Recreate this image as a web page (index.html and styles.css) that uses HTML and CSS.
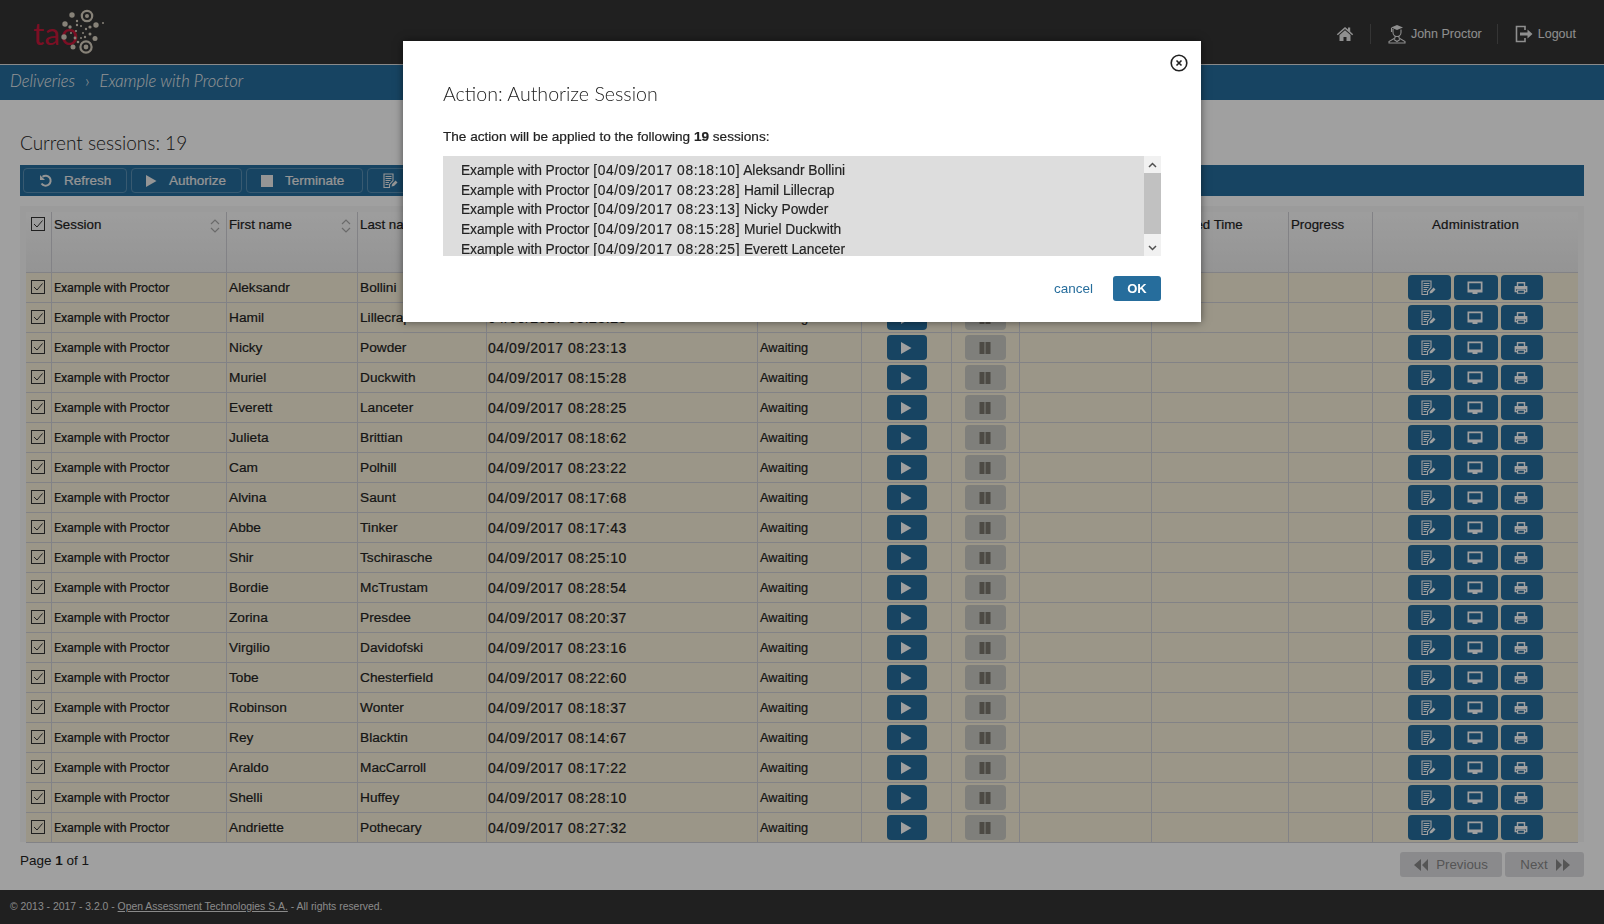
FILE: index.html
```html
<!DOCTYPE html>
<html lang="en">
<head>
    <meta charset="UTF-8">
    <title>Current sessions</title>
    <link rel="stylesheet" href="styles.css">
</head>
<body>
    <svg class="icon-defs" xmlns="http://www.w3.org/2000/svg">
        <symbol id="i-check" viewBox="0 0 14 14">
            <rect x="0.5" y="0.5" width="13" height="13" fill="none" stroke="currentColor"/>
            <path d="M3 7l3 3 5.5-6.5" fill="none" stroke="currentColor" stroke-width="1"/>
        </symbol>
        <symbol id="i-play" viewBox="0 0 14 14">
            <path d="M2 1v12l10.500-6z" fill="currentColor"/>
        </symbol>
        <symbol id="i-pause" viewBox="0 0 14 14">
            <path d="M1.500 1h5v12h-5zM7.500 1h5v12h-5z" fill="currentColor"/>
        </symbol>
        <symbol id="i-report" viewBox="0 0 16 16">
            <path d="M2 1h9v6.500l-3.500 4v3h-5.500z M3.500 3.500h6M3.500 5.500h6M3.500 7.500h5M3.500 9.500h3.500M3.500 11.500h3" fill="none" stroke="currentColor" stroke-width="1.100"/>
            <path d="M9.500 13.500l0.600-2.500 3.500-3.500 1.900 1.900-3.500 3.500z" fill="currentColor"/>
        </symbol>
        <symbol id="i-monitor" viewBox="0 0 16 16">
            <path d="M0.500 1.500h15v11h-5v1.500h-5v-1.500h-5z M2.200 3.200v6.300h11.600v-6.300z" fill="currentColor" fill-rule="evenodd"/>
        </symbol>
        <symbol id="i-print" viewBox="0 0 16 16">
            <path d="M4 6v-4h8v4M4 12h-2.500v-5.500h13v5.500h-2.500" fill="none" stroke="currentColor" stroke-width="1.600"/>
            <path d="M4 10.500h8v3.500h-8z" fill="none" stroke="currentColor" stroke-width="1.400"/>
            <path d="M1.500 6.500h13v3h-13z" fill="currentColor"/>
        </symbol>
        <symbol id="i-sort" viewBox="0 0 10 14">
            <path d="M1 5l4-4 4 4M1 9l4 4 4-4" fill="none" stroke="currentColor" stroke-width="1.200"/>
        </symbol>
    </svg>

    <header class="topbar">
        <a class="logo" href="#">
            <svg width="80" height="56" viewBox="30 4 80 56" xmlns="http://www.w3.org/2000/svg">
                <text class="logo-word" x="33" y="45">tao</text>
                <g class="logo-dots">
                    <circle cx="87" cy="16" r="5.200" fill="none" stroke-width="2.200"/>
                    <circle cx="87" cy="16" r="2"/>
                    <circle cx="86" cy="47" r="5.600" fill="none" stroke-width="2.200"/>
                    <circle cx="86" cy="47" r="2.400"/>
                    <circle cx="64" cy="37" r="2.700"/>
                    <circle cx="72" cy="15" r="2.700"/>
                    <circle cx="65" cy="24" r="2.700"/>
                    <circle cx="96" cy="25" r="2.700"/>
                    <circle cx="95" cy="38.500" r="2.500"/>
                    <circle cx="73" cy="47" r="2.500"/>
                    <circle cx="70" cy="27" r="1.700"/>
                    <circle cx="77" cy="21" r="1.200"/>
                    <circle cx="77" cy="25" r="1.200"/>
                    <circle cx="81" cy="26" r="1"/>
                    <circle cx="90" cy="27" r="1.600"/>
                    <circle cx="86" cy="29" r="1.200"/>
                    <circle cx="76" cy="31" r="1.100"/>
                    <circle cx="83" cy="33" r="1"/>
                    <circle cx="90" cy="34" r="1.500"/>
                    <circle cx="85" cy="37" r="1.200"/>
                    <circle cx="75" cy="38" r="1.400"/>
                    <circle cx="78" cy="42" r="1.300"/>
                    <circle cx="81" cy="38" r="1"/>
                    <circle cx="71" cy="33" r="1"/>
                    <circle cx="103" cy="23" r="1"/>
                </g>
            </svg>
        </a>
        <nav class="user-nav">
            <a class="nav-item" href="#">
                <svg width="18" height="16" viewBox="0 0 18 16" xmlns="http://www.w3.org/2000/svg"><path d="M9 1l3 2.600v-2h2.200v4l3 2.600-1 1.100-7.200-6.200-7.200 6.200-1-1.100z M3.500 9l5.500-4.800 5.500 4.800v6h-4v-4h-3v4h-4z" fill="currentColor"/></svg>
            </a>
            <a class="nav-item" href="#">
                <svg width="18" height="20" viewBox="0 0 18 20" xmlns="http://www.w3.org/2000/svg"><path d="M3 3.500l6-2.500 6 2.500-6 2.500z" fill="currentColor"/><path d="M5 5v3.500c0 2.500 2 4 4 4s4-1.500 4-4v-3M7 12v2l-6 3.500v1.500h16v-1.500l-6-3.500v-2M6 15.500l3 2 3-2M3.500 4v4" fill="none" stroke="currentColor" stroke-width="1.100"/></svg>
                <span>John Proctor</span>
            </a>
            <a class="nav-item" href="#">
                <svg width="18" height="18" viewBox="0 0 18 18" xmlns="http://www.w3.org/2000/svg"><path d="M10 5v-3.500h-8.500v15h8.500v-3.500" fill="none" stroke="currentColor" stroke-width="1.600"/><path d="M5 7.500h7.500v-3l5 4.500-5 4.500v-3h-7.500z" fill="currentColor"/></svg>
                <span>Logout</span>
            </a>
        </nav>
    </header>

    <div class="breadcrumbs">
        <a href="#">Deliveries</a>
        <span class="crumb-sep">&#8250;</span>
        <a href="#">Example with Proctor</a>
    </div>

    <main class="content">
        <h2 class="page-title">Current sessions: 19</h2>

        <div class="toolbar">
            <button class="tool-btn tool-refresh">
                <svg width="14" height="14" viewBox="0 0 14 14" xmlns="http://www.w3.org/2000/svg"><path d="M3.500 2.800a5 5 0 1 1-1 6.700" fill="none" stroke="currentColor" stroke-width="2"/><path d="M1 1v5h5z" fill="currentColor"/></svg>
                Refresh
            </button>
            <button class="tool-btn tool-authorize"><svg width="14" height="14"><use href="#i-play"/></svg> Authorize</button>
            <button class="tool-btn tool-terminate"><span class="stop-square"></span> Terminate</button>
            <button class="tool-btn tool-report"><svg width="16" height="16"><use href="#i-report"/></svg> Report</button>
        </div>

        <div class="table-wrap">
            <table class="sessions">
                <colgroup>
                    <col class="c-check"><col class="c-session"><col class="c-first"><col class="c-last"><col class="c-date"><col class="c-status"><col class="c-auth"><col class="c-pause"><col class="c-remain"><col class="c-ext"><col class="c-progress"><col class="c-admin">
                </colgroup>
                <thead>
                    <tr>
                        <th><svg class="check"><use href="#i-check"/></svg></th>
                        <th class="sortable">Session <svg class="sort"><use href="#i-sort"/></svg></th>
                        <th class="sortable">First name <svg class="sort"><use href="#i-sort"/></svg></th>
                        <th>Last name</th>
                        <th>Started at</th>
                        <th>Status</th>
                        <th>Authorize</th>
                        <th>Pause</th>
                        <th>Remaining</th>
                        <th>Extended Time</th>
                        <th>Progress</th>
                        <th class="th-center">Administration</th>
                    </tr>
                </thead>
                <tbody id="rows"></tbody>
            </table>
        </div>

        <div class="page-foot">
            <div class="page-count">Page <b>1</b> of 1</div>
            <div class="pager">
                <button class="page-btn btn-prev"><svg width="16" height="14" viewBox="0 0 16 14" xmlns="http://www.w3.org/2000/svg"><path d="M8 1v12l-7-6zM15 1v12l-6-6z" fill="currentColor"/></svg> Previous</button>
                <button class="page-btn btn-next">Next <svg width="16" height="14" viewBox="0 0 16 14" xmlns="http://www.w3.org/2000/svg"><path d="M1 1v12l6-6zM8 1v12l7-6z" fill="currentColor"/></svg></button>
            </div>
        </div>
    </main>

    <footer class="footer">&copy; 2013 - 2017 - 3.2.0 - <a href="#">Open Assessment Technologies S.A.</a> - All rights reserved.</footer>

    <div class="backdrop"></div>

    <div class="modal">
        <button class="modal-close">
            <svg width="18" height="18" viewBox="0 0 18 18" xmlns="http://www.w3.org/2000/svg"><circle cx="9" cy="9" r="7.800" fill="none" stroke="currentColor" stroke-width="1.600"/><path d="M6.500 6.500l5 5M11.500 6.500l-5 5" fill="none" stroke="currentColor" stroke-width="1.600"/></svg>
        </button>
        <h3 class="modal-title">Action: Authorize Session</h3>
        <p class="modal-text">The action will be applied to the following <b>19</b> sessions:</p>
        <div class="list-box">
            <ul class="session-list" id="sessionList"></ul>
            <div class="fake-scroll">
                <span class="scroll-arrow">
                    <svg width="9" height="6" viewBox="0 0 9 6" xmlns="http://www.w3.org/2000/svg"><path d="M1 5l3.500-3.500 3.500 3.500" fill="none" stroke="currentColor" stroke-width="1.500"/></svg>
                </span>
                <span class="scroll-thumb"></span>
                <span class="scroll-arrow scroll-down">
                    <svg width="9" height="6" viewBox="0 0 9 6" xmlns="http://www.w3.org/2000/svg"><path d="M1 1l3.500 3.500 3.500-3.500" fill="none" stroke="currentColor" stroke-width="1.500"/></svg>
                </span>
            </div>
        </div>
        <div class="modal-actions">
            <a class="cancel-link" href="#">cancel</a>
            <button class="ok-btn">OK</button>
        </div>
    </div>

    <script>
        const sessions = [
            ["Aleksandr", "Bollini", "08:18:10"],
            ["Hamil", "Lillecrap", "08:23:28"],
            ["Nicky", "Powder", "08:23:13"],
            ["Muriel", "Duckwith", "08:15:28"],
            ["Everett", "Lanceter", "08:28:25"],
            ["Julieta", "Brittian", "08:18:62"],
            ["Cam", "Polhill", "08:23:22"],
            ["Alvina", "Saunt", "08:17:68"],
            ["Abbe", "Tinker", "08:17:43"],
            ["Shir", "Tschirasche", "08:25:10"],
            ["Bordie", "McTrustam", "08:28:54"],
            ["Zorina", "Presdee", "08:20:37"],
            ["Virgilio", "Davidofski", "08:23:16"],
            ["Tobe", "Chesterfield", "08:22:60"],
            ["Robinson", "Wonter", "08:18:37"],
            ["Rey", "Blacktin", "08:14:67"],
            ["Araldo", "MacCarroll", "08:17:22"],
            ["Shelli", "Huffey", "08:28:10"],
            ["Andriette", "Pothecary", "08:27:32"]
        ];

        const rows = document.getElementById("rows");
        const list = document.getElementById("sessionList");

        sessions.forEach(([first, last, time]) => {
            const date = `04/09/2017 ${time}`;
            rows.insertAdjacentHTML("beforeend", `
                <tr>
                    <td><svg class="check"><use href="#i-check"/></svg></td>
                    <td class="td-session">Example with Proctor</td>
                    <td>${first}</td>
                    <td>${last}</td>
                    <td class="td-date">${date}</td>
                    <td class="td-status">Awaiting</td>
                    <td class="td-auth"><button class="row-btn btn-play"><svg width="14" height="14"><use href="#i-play"/></svg></button></td>
                    <td class="td-pause"><button class="row-btn btn-pause"><svg width="14" height="14"><use href="#i-pause"/></svg></button></td>
                    <td></td>
                    <td></td>
                    <td></td>
                    <td class="td-admin">
                        <div class="admin-btns">
                            <button class="row-btn btn-admin btn-report"><svg width="16" height="16"><use href="#i-report"/></svg></button>
                            <button class="row-btn btn-admin wide"><svg width="16" height="16"><use href="#i-monitor"/></svg></button>
                            <button class="row-btn btn-admin narrow"><svg width="14" height="14"><use href="#i-print"/></svg></button>
                        </div>
                    </td>
                </tr>`);
            list.insertAdjacentHTML("beforeend", `<li><span class="li-session">Example with Proctor</span> <span class="li-date">[${date}]</span> ${first} ${last}</li>`);
        });
    </script>
</body>
</html>
```

FILE: styles.css
```css
* {
    box-sizing: border-box;
}

html {
    height: 924px;
    overflow: hidden;
}

body {
    margin: 0;
    display: flex;
    flex-direction: column;
    height: 924px;
    overflow: hidden;
    font-family: "Liberation Sans", Arial, sans-serif;
    font-size: 14px;
    color: #222;
    background-color: #fff;
}

a {
    color: inherit;
    text-decoration: none;
}

button {
    font-family: inherit;
    cursor: pointer;
}

.icon-defs {
    display: none;
}

.topbar {
    height: 65px;
    flex: none;
    display: flex;
    justify-content: space-between;
    align-items: center;
    background-color: #333;
    border-bottom: 1px solid #ddd;
    padding: 0 28px 0 30px;
}

.logo {
    display: block;
    height: 56px;
    margin-top: -1px;
}

.logo-word {
    font-family: Lato, "Liberation Sans", sans-serif;
    font-size: 31px;
    letter-spacing: 0.5px;
    fill: #c4183a;
}

.logo-dots {
    fill: #d8cfc0;
    stroke: #d8cfc0;
    stroke-width: 0;
}

.user-nav {
    display: flex;
    align-items: center;
    padding-top: 4px;
}

.nav-item {
    display: flex;
    align-items: center;
    gap: 5px;
    height: 20px;
    color: #e4e4e4;
    font-size: 12.500px;
    padding: 0 15px 0 17px;
    border-right: 1px solid #555;
}

.nav-item:first-child {
    padding-left: 0;
    padding-right: 16px;
}

.nav-item:last-child {
    border-right: 0;
    padding-right: 0;
}

.breadcrumbs {
    height: 35px;
    flex: none;
    display: flex;
    align-items: center;
    gap: 10px;
    padding: 0 0 3px 10px;
    background-color: #266d9c;
    color: #eee;
    font-family: Lato, "Liberation Sans", sans-serif;
    font-size: 16.600px;
    font-style: italic;
    font-weight: 300;
}

.crumb-sep {
    font-style: normal;
}

.content {
    flex: 1;
    padding: 0 20px;
    background-color: #fff;
}

.page-title {
    margin: 28px 0 7px;
    font-family: Lato, "Liberation Sans", sans-serif;
    font-size: 19px;
    font-weight: 300;
    line-height: 30px;
}

.toolbar {
    height: 31px;
    display: flex;
    align-items: center;
    gap: 4px;
    padding-left: 3px;
    background-color: #266d9c;
}

.tool-btn {
    height: 25px;
    display: flex;
    align-items: center;
    padding: 0;
    background-color: #266d9c;
    border: 1px solid #5a90b4;
    border-radius: 4px;
    color: #eee;
    font-size: 13.500px;
    -webkit-text-stroke: 0.2px;
}

.tool-refresh {
    width: 104px;
    padding-left: 15px;
    gap: 11px;
}

.tool-authorize {
    width: 111px;
    padding-left: 12px;
    gap: 11px;
}

.tool-terminate {
    width: 117px;
    padding-left: 14px;
    gap: 12px;
}

.tool-report {
    width: 100px;
    padding-left: 14px;
    gap: 10px;
}

.stop-square {
    width: 12px;
    height: 12px;
    background-color: #eee;
}

.table-wrap {
    height: 636px;
    margin-top: 10px;
    padding: 6px 6px 0;
    background-color: #f8f8f8;
}

.sessions {
    width: 1552px;
    table-layout: fixed;
    border-collapse: separate;
    border-spacing: 0;
    font-size: 13.700px;
    -webkit-text-stroke: 0.2px;
}

.c-check { width: 26px; }
.c-session { width: 175px; }
.c-first { width: 131px; }
.c-last { width: 129px; }
.c-date { width: 271px; }
.c-status { width: 104px; }
.c-auth { width: 90px; }
.c-pause { width: 68px; }
.c-remain { width: 132px; }
.c-ext { width: 137px; }
.c-progress { width: 84px; }
.c-admin { width: 205px; }

.sessions th {
    position: relative;
    height: 60px;
    padding: 5px 0 0 2px;
    vertical-align: top;
    text-align: left;
    font-size: 13.300px;
    font-weight: 400;
    line-height: 16px;
    white-space: nowrap;
    background: linear-gradient(#fbfbfb, #ececec);
    border-right: 1px solid #cfd0d6;
}

.sessions th:last-child {
    border-right: 0;
}

.sessions th:first-child {
    padding: 5px 0 0 5px;
}

.sessions th.th-center {
    text-align: center;
    padding-left: 0;
    letter-spacing: 0.2px;
}

.sort {
    position: absolute;
    right: 6px;
    top: 7px;
    width: 10px;
    height: 14px;
    color: #aaa;
}

.check {
    width: 14px;
    height: 14px;
    display: block;
    color: #333;
}

.sessions td {
    height: 30px;
    padding: 0 0 0 2px;
    background-color: #f7efd9;
    border-top: 1px solid #cfd0d6;
    border-right: 1px solid #cfd0d6;
    white-space: nowrap;
    line-height: 16px;
}

.sessions tr:last-child td {
    box-shadow: 0 1px 0 #cfd0d6;
}

.sessions td:last-child {
    border-right: 0;
}

.sessions td:first-child {
    padding: 0 0 2px 5px;
}

.sessions .td-session {
    font-family: Roboto, sans-serif;
    font-size: 12.500px;
    letter-spacing: -0.15px;
}

.sessions .td-date {
    font-size: 14px;
    letter-spacing: 0.55px;
    padding-left: 1px;
}

.td-status {
    font-size: 12.800px;
}

.sessions .td-auth {
    padding-left: 25px;
}

.sessions .td-pause {
    padding-left: 13px;
}

.sessions .td-admin {
    padding-left: 35px;
}

.admin-btns {
    display: flex;
    gap: 3px;
}

.row-btn {
    height: 25px;
    display: flex;
    align-items: center;
    justify-content: center;
    padding: 0;
    border: 0;
    border-radius: 4px;
    color: #fff;
    background-color: #266d9c;
}

.btn-play {
    width: 40px;
    padding-right: 2px;
}

.btn-pause {
    width: 41px;
    padding-right: 2px;
    background-color: #cbcbc4;
    color: #7b766d;
}

.btn-admin {
    width: 43px;
}

.btn-report {
    padding-right: 3px;
}

.btn-admin.wide {
    width: 44px;
    padding-right: 2px;
}

.btn-admin.narrow {
    width: 42px;
    padding-right: 2px;
}

.page-foot {
    display: flex;
    justify-content: space-between;
    margin-top: 10px;
}

.page-count {
    margin-top: 1px;
    font-size: 13.500px;
    line-height: 16px;
}

.pager {
    display: flex;
    gap: 3px;
}

.page-btn {
    height: 25px;
    display: flex;
    align-items: center;
    justify-content: center;
    padding: 0;
    border: 0;
    border-radius: 3px;
    background-color: #dddde0;
    color: #888;
    font-size: 13.300px;
}

.btn-prev {
    width: 102px;
    gap: 7px;
    padding-right: 1px;
}

.btn-next {
    width: 79px;
    gap: 7px;
    padding-left: 2px;
}

.footer {
    height: 34px;
    flex: none;
    padding-left: 10px;
    background-color: #333;
    color: #ddd;
    font-size: 10.400px;
    line-height: 34px;
}

.footer a {
    text-decoration: underline;
}

.backdrop {
    position: fixed;
    top: 0;
    left: 0;
    right: 0;
    bottom: 0;
    z-index: 10;
    background-color: rgba(0, 0, 0, 0.373);
}

.modal {
    position: absolute;
    top: 41px;
    left: 403px;
    width: 798px;
    height: 281px;
    z-index: 20;
    padding: 39px 40px 0;
    background-color: #fff;
    box-shadow: 0 0 8px rgba(0, 0, 0, 0.5);
}

.modal-close {
    position: absolute;
    top: 13px;
    right: 13px;
    width: 18px;
    height: 18px;
    padding: 0;
    border: 0;
    background: none;
    color: #222;
}

.modal-title {
    margin: 0;
    font-family: Lato, "Liberation Sans", sans-serif;
    font-size: 19.600px;
    font-weight: 300;
    line-height: 28px;
}

.modal-text {
    margin: 19px 0 9px;
    font-size: 13.600px;
    line-height: 20px;
    -webkit-text-stroke: 0.2px;
}

.list-box {
    display: flex;
    height: 100px;
    font-size: 13.800px;
    -webkit-text-stroke: 0.15px;
}

.session-list {
    flex: 1;
    margin: 0;
    padding: 5px 0 0 18px;
    list-style: none;
    overflow: hidden;
    background-color: #ddd;
    line-height: 19.700px;
}

.li-session {
    letter-spacing: -0.1px;
}

.li-date {
    letter-spacing: 0.6px;
}

.fake-scroll {
    width: 17px;
    display: flex;
    flex-direction: column;
    background-color: #f1f1f1;
}

.scroll-arrow {
    height: 17px;
    display: flex;
    align-items: center;
    justify-content: center;
    color: #505050;
}

.scroll-thumb {
    height: 61px;
    background-color: #c1c1c1;
}

.scroll-down {
    margin-top: auto;
}

.modal-actions {
    display: flex;
    justify-content: flex-end;
    align-items: center;
    gap: 20px;
    margin-top: 20px;
}

.cancel-link {
    color: #266d9c;
    font-size: 13.500px;
}

.ok-btn {
    width: 48px;
    height: 25px;
    padding: 0;
    border: 0;
    border-radius: 3px;
    background-color: #266d9c;
    color: #fff;
    font-size: 13px;
    font-weight: 700;
}
```
